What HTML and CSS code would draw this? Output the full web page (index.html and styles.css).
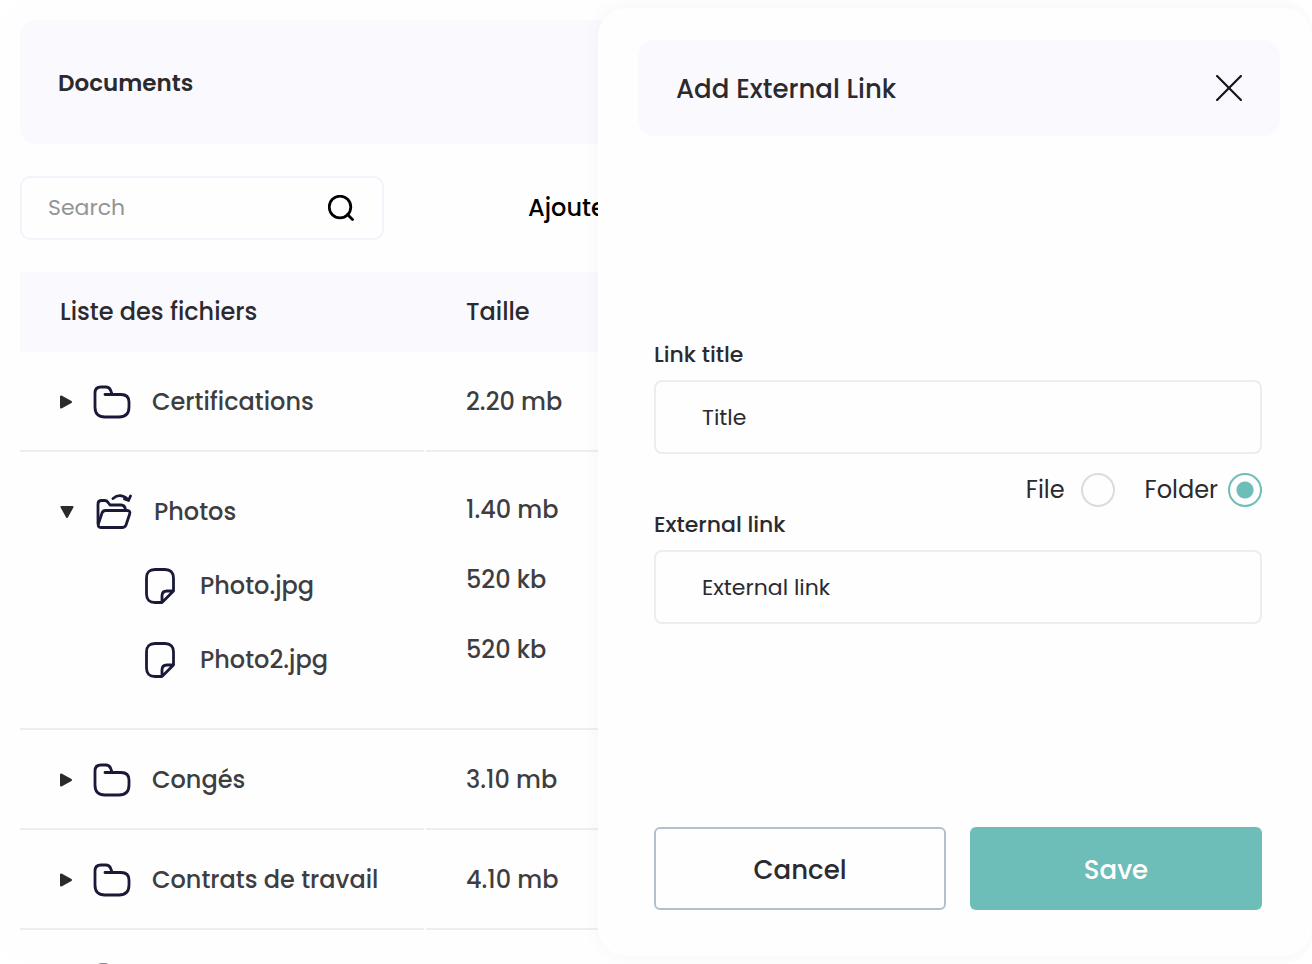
FILE: index.html
```
<!DOCTYPE html>
<html lang="fr">
<head>
<meta charset="utf-8">
<meta name="viewport" content="width=device-width, initial-scale=1">
<title>Documents</title>
<link rel="stylesheet" href="styles.css">
</head>
<body>
<svg class="sprite" aria-hidden="true">
  <symbol id="folder" viewBox="0 0 38 34">
    <path d="M12 9.500H28Q36 9.500 36 17V22Q36 32 26 32H12Q2 32 2 22V8Q2 2 8 2H13Q16 2 17.500 5L19 9"/>
  </symbol>
  <symbol id="folder-open" viewBox="0 0 36 36">
    <path d="M2 30V10Q2 6.500 5.500 6.500H9Q11 6.500 12.500 9L14 11H25Q29 11 29.500 16"/>
    <path d="M9.500 16.500H31Q35 16.500 33.500 20.500L30 31Q29 33.500 26 33.500H5Q1.500 33.500 2.500 29.500L6 19Q7 16.500 9.500 16.500Z"/>
    <path d="M17 4.500Q24 -1.500 31.500 5M34.500 2L32.500 6.500L28.500 5"/>
  </symbol>
  <symbol id="file" viewBox="0 0 30 36">
    <path d="M16.500 34.500H10Q1.500 34.500 1.500 26V10Q1.500 1.500 10 1.500H20Q28.500 1.500 28.500 10V23L17 34.500V28Q17 23 22 23H28.500"/>
  </symbol>
  <symbol id="caret-right" viewBox="0 0 12 14">
    <path d="M1 1.500V12.500L11 7Z"/>
  </symbol>
  <symbol id="caret-down" viewBox="0 0 14 12">
    <path d="M1.500 1H12.500L7 11Z"/>
  </symbol>
</svg>

<div class="app">
  <main class="page">
    <header class="page-header"><h1>Documents</h1></header>

    <div class="toolbar">
      <div class="search">
        <input type="search" placeholder="Search" aria-label="Search">
        <button type="button" aria-label="Search">
          <svg class="icon-search" viewBox="0 0 26 26"><circle cx="12" cy="12" r="10.800"/><path d="M19.500 19.500L24.500 24.500"/></svg>
        </button>
      </div>
      <button type="button" class="add">Ajouter</button>
    </div>

    <table class="files">
      <thead>
        <tr><th scope="col">Liste des fichiers</th><th scope="col">Taille</th></tr>
      </thead>
      <tbody>
        <tr>
          <td><div class="entry"><svg class="caret-right"><use href="#caret-right"/></svg><svg class="folder"><use href="#folder"/></svg>Certifications</div></td>
          <td>2.20 mb</td>
        </tr>
        <tr class="open">
          <td>
            <div class="entry"><svg class="caret-down"><use href="#caret-down"/></svg><svg class="folder-open"><use href="#folder-open"/></svg>Photos</div>
            <ul class="children">
              <li><svg class="file"><use href="#file"/></svg>Photo.jpg</li>
              <li><svg class="file"><use href="#file"/></svg>Photo2.jpg</li>
            </ul>
          </td>
          <td>
            <ul class="sizes"><li>1.40 mb</li><li>520 kb</li><li>520 kb</li></ul>
          </td>
        </tr>
        <tr>
          <td><div class="entry"><svg class="caret-right"><use href="#caret-right"/></svg><svg class="folder"><use href="#folder"/></svg>Congés</div></td>
          <td>3.10 mb</td>
        </tr>
        <tr>
          <td><div class="entry"><svg class="caret-right"><use href="#caret-right"/></svg><svg class="folder"><use href="#folder"/></svg>Contrats de travail</div></td>
          <td>4.10 mb</td>
        </tr>
        <tr>
          <td><div class="entry"><svg class="caret-right"><use href="#caret-right"/></svg><svg class="folder"><use href="#folder"/></svg></div></td>
          <td></td>
        </tr>
      </tbody>
    </table>
  </main>

  <aside class="drawer" role="dialog" aria-labelledby="drawer-title">
    <header class="drawer-header">
      <h2 id="drawer-title">Add External Link</h2>
      <button type="button" class="close" aria-label="Close">
        <svg class="icon-close" viewBox="0 0 24 24"><path d="M1 1L23 23M23 1L1 23"/></svg>
      </button>
    </header>
    <form class="form">
      <div class="fields">
        <label class="label" for="link-title">Link title</label>
        <input class="field" id="link-title" type="text" value="Title">
        <div class="kinds">
          <label>File <input type="radio" name="kind" value="file"></label>
          <label>Folder <input type="radio" name="kind" value="folder" checked></label>
        </div>
        <label class="label" for="external-link">External link</label>
        <input class="field" id="external-link" type="text" value="External link">
      </div>
      <div class="actions">
        <button type="button" class="cancel">Cancel</button>
        <button type="submit" class="save">Save</button>
      </div>
    </form>
  </aside>
</div>
</body>
</html>
```
FILE: styles.css
```
* { box-sizing: border-box; }

body {
  margin: 0;
  background: #fff;
  color: #2b2a2f;
  font-family: Poppins, Inter, "Open Sans", sans-serif;
  font-size: 24px;
  font-weight: 500;
  line-height: 32px;
}

h1, h2, ul { margin: 0; padding: 0; font-size: inherit; list-style: none; }
button, input { font: inherit; color: inherit; }
button { padding: 0; border: 0; background: none; cursor: pointer; }
svg { display: block; flex: none; fill: none; stroke: #1a1a38; stroke-width: 2.8; stroke-linecap: round; stroke-linejoin: round; }
.sprite { position: absolute; width: 0; height: 0; }

.app {
  position: relative;
  height: 100vh;
  overflow: hidden;
  border-radius: 28px;
  background: #fefefe;
}

.page { padding: 20px; }

.page-header {
  display: flex;
  align-items: center;
  height: 124px;
  padding: 2px 38px 0;
  border-radius: 16px;
  background: #faf9fe;
}
.page-header h1 { font-size: 23px; font-weight: 600; }

.toolbar {
  display: flex;
  align-items: center;
  gap: 144px;
  margin: 32px 0;
}
.search {
  display: flex;
  align-items: center;
  width: 364px;
  height: 64px;
  padding: 0 28px 0 26px;
  border: 2px solid #f3f4fb;
  border-radius: 10px;
}
.search input {
  flex: 1;
  min-width: 0;
  padding: 0;
  border: 0;
  outline: 0;
  background: none;
  font-size: 22px;
  font-weight: 400;
  -webkit-appearance: none;
  appearance: none;
}
.search input::placeholder { color: #949494; opacity: 1; }
.icon-search { width: 26px; height: 26px; stroke: #000; }
.add { color: #000; }

.files {
  width: 100%;
  table-layout: fixed;
  border-collapse: separate;
  border-spacing: 2px 0;
  margin: 0 -2px;
  color: #3e3e42;
  text-align: left;
}
.files th {
  height: 80px;
  padding: 0 40px;
  background: #faf9fe;
  color: #2b2a2f;
  font-weight: 500;
  box-shadow: -2px 0 #faf9fe;
}
.files th:first-child { width: 404px; box-shadow: none; }
.files td { height: 100px; padding: 2px 40px 0; border-bottom: 2px solid #ededee; }
.files .open td { position: relative; height: 278px; padding-top: 42px; vertical-align: top; }
.files .open td:first-child::after {
  content: "";
  position: absolute;
  right: -2px;
  bottom: -2px;
  width: 2px;
  height: 2px;
  background: #ededee;
}

.entry { display: flex; align-items: center; }
.caret-right, .caret-down { fill: #2b2a2f; stroke: #2b2a2f; stroke-width: 2; }
.caret-right { width: 12px; height: 14px; }
.caret-down { width: 14px; height: 12px; }
.folder { width: 38px; height: 34px; margin: 0 21px; }
.folder-open { width: 36px; height: 36px; margin: 0 22px; }
.file { width: 30px; height: 36px; }
.children { padding: 19px 0 0 85px; }
.children li { display: flex; align-items: center; gap: 25px; height: 74px; }
.sizes li { height: 70px; }

.drawer {
  position: absolute;
  inset: 8px 0 8px 598px;
  display: flex;
  flex-direction: column;
  padding: 32px 32px 46px 40px;
  border-radius: 28px;
  background: #fefefe;
  box-shadow: 0 0 20px rgba(70, 50, 110, 0.04);
}
.drawer-header {
  display: flex;
  align-items: center;
  justify-content: space-between;
  height: 96px;
  padding: 0 38px;
  border-radius: 16px;
  background: #faf9fe;
}
.drawer-header h2 { padding-top: 2px; font-size: 26px; font-weight: 500; }
.icon-close { width: 26px; height: 26px; stroke: #151518; stroke-width: 2; }

.form { flex: 1; display: flex; flex-direction: column; padding: 0 18px 0 16px; }
.fields { display: flex; flex-direction: column; margin: auto 0; }
.label { padding-bottom: 9px; font-size: 22px; }
.field {
  width: 100%;
  height: 74px;
  padding: 0 46px;
  border: 2px solid #ededf0;
  border-radius: 8px;
  background: #fefefe;
  font-size: 22px;
  font-weight: 400;
  outline: 0;
}
.kinds {
  display: flex;
  justify-content: flex-end;
  gap: 30px;
  padding: 19px 0 2px;
  font-weight: 400;
}
.kinds label { display: flex; align-items: center; gap: 10px; }
.kinds label:first-child { gap: 16px; }
.kinds input {
  width: 34px;
  height: 34px;
  margin: 0;
  border: 2px solid #dcdcde;
  border-radius: 50%;
  -webkit-appearance: none;
  appearance: none;
}
.kinds input:checked {
  border-color: #6dbdb9;
  background: radial-gradient(circle, #6dbdb9 8px, transparent 9px);
}

.actions { display: grid; grid-template-columns: 1fr 1fr; gap: 24px; }
.actions button { height: 83px; padding-top: 2px; border-radius: 6px; font-size: 26px; font-weight: 500; }
.cancel { border: 2px solid #b3bfcf; }
.save { background: #6dbdb9; color: #fff; }
```
